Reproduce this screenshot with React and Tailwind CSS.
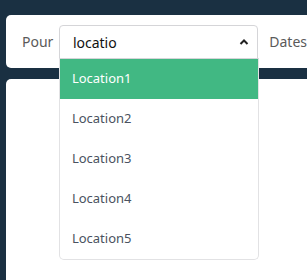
import React from "react";

export default function App() {
  const opts = ["Location1", "Location2", "Location3", "Location4", "Location5"];
  return (
    <div className="w-[307px] h-[280px] bg-[#1a3042] overflow-hidden relative" style={{ fontFamily: '"Noto Sans", sans-serif' }}>
      <div className="pt-[15px] pl-[6px]">
        <div className="h-[53px] bg-white rounded-l-[5px] flex items-center pl-[16px]">
          <span className="text-[14px] text-[#5a5a5a] w-[37px]">Pour</span>
          <div className="relative w-[200px] h-[34px] mt-[1px]">
            <div className="h-[34px] border border-[#d5d5d8] rounded-t-[4px] flex items-center pl-[13px] pr-[8px] justify-between">
              <span className="text-[14px] text-[#111]">locatio</span>
              <svg width="10" height="8" viewBox="0 0 10 8"><path d="M1.5 6 L5 2.5 L8.5 6" stroke="#222" strokeWidth="2" fill="none" /></svg>
            </div>
            <div className="absolute left-0 top-[33px] w-[200px] bg-white border border-[#e2e2e4] border-t-[#d5d5d8] rounded-b-[5px] z-10">
              {opts.map((o, i) => (
                <div key={o} className={`h-[40px] flex items-center pl-[12px] text-[13px] ${i === 0 ? "bg-[#41b883] text-white" : "text-[#4a5260]"}`}>{o}</div>
              ))}
            </div>
          </div>
          <span className="text-[14px] text-[#5a5a5a] ml-[11px]">Dates</span>
        </div>
        <div className="mt-[11px] h-[220px] bg-white rounded-l-[5px]"></div>
      </div>
    </div>
  );
}
